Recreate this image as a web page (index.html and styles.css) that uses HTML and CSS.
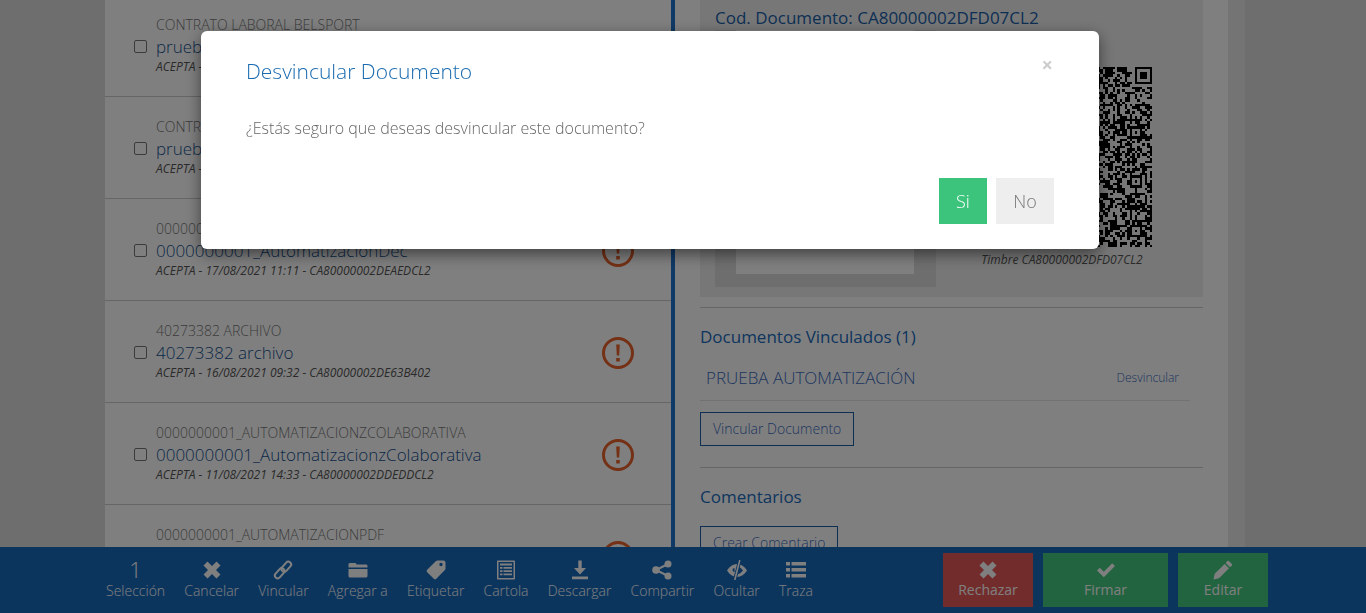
FILE: index.html

```html
<!DOCTYPE html>
<html>
<head>
    <title>Desvincular Documento</title>
    <link rel="stylesheet" href="styles.css">
</head>
<body>
    <div class="page">
        <div class="content">
            <div class="doc-list">
                <div class="doc-row">
                    <input type="checkbox" class="doc-check">
                    <div class="doc-info">
                        <div class="doc-type">CONTRATO LABORAL BELSPORT</div>
                        <a class="doc-name">prueba automatización</a>
                        <div class="doc-meta">ACEPTA - 18/08/2021 10:20 - CA80000002DFD07CL2</div>
                    </div>
                </div>
                <div class="doc-row">
                    <input type="checkbox" class="doc-check">
                    <div class="doc-info">
                        <div class="doc-type">CONTRATO LABORAL BELSPORT</div>
                        <a class="doc-name">prueba automatización</a>
                        <div class="doc-meta">ACEPTA - 18/08/2021 09:47 - CA80000002DF0A3CL2</div>
                    </div>
                </div>
                <div class="doc-row">
                    <input type="checkbox" class="doc-check">
                    <div class="doc-info">
                        <div class="doc-type">0000000001_AUTOMATIZACIONDEC</div>
                        <a class="doc-name">0000000001_AutomatizacionDec</a>
                        <div class="doc-meta">ACEPTA - 17/08/2021 11:11 - CA80000002DEAEDCL2</div>
                    </div>
                    <svg class="doc-alert" viewBox="0 0 32 32"><circle cx="16" cy="16" r="14.5"/><path class="mark" d="M14.2 7.5h3.6l-.6 11h-2.4zM14.2 21h3.6v3.6h-3.6z"/></svg>
                </div>
                <div class="doc-row">
                    <input type="checkbox" class="doc-check">
                    <div class="doc-info">
                        <div class="doc-type">40273382 ARCHIVO</div>
                        <a class="doc-name">40273382 archivo</a>
                        <div class="doc-meta">ACEPTA - 16/08/2021 09:32 - CA80000002DE63B402</div>
                    </div>
                    <svg class="doc-alert" viewBox="0 0 32 32"><circle cx="16" cy="16" r="14.5"/><path class="mark" d="M14.2 7.5h3.6l-.6 11h-2.4zM14.2 21h3.6v3.6h-3.6z"/></svg>
                </div>
                <div class="doc-row">
                    <input type="checkbox" class="doc-check">
                    <div class="doc-info">
                        <div class="doc-type">0000000001_AUTOMATIZACIONZCOLABORATIVA</div>
                        <a class="doc-name">0000000001_AutomatizacionzColaborativa</a>
                        <div class="doc-meta">ACEPTA - 11/08/2021 14:33 - CA80000002DDEDDCL2</div>
                    </div>
                    <svg class="doc-alert" viewBox="0 0 32 32"><circle cx="16" cy="16" r="14.5"/><path class="mark" d="M14.2 7.5h3.6l-.6 11h-2.4zM14.2 21h3.6v3.6h-3.6z"/></svg>
                </div>
                <div class="doc-row">
                    <input type="checkbox" class="doc-check">
                    <div class="doc-info">
                        <div class="doc-type">0000000001_AUTOMATIZACIONPDF</div>
                        <a class="doc-name">0000000001_AutomatizacionPdf</a>
                        <div class="doc-meta">ACEPTA - 10/08/2021 12:05 - CA80000002DD1F2CL2</div>
                    </div>
                    <svg class="doc-alert" viewBox="0 0 32 32"><circle cx="16" cy="16" r="14.5"/><path class="mark" d="M14.2 7.5h3.6l-.6 11h-2.4zM14.2 21h3.6v3.6h-3.6z"/></svg>
                </div>
            </div>

            <div class="detail">
                <div class="doc-box">
                    <div class="doc-code">Cod. Documento: CA80000002DFD07CL2</div>
                    <div class="doc-box-body">
                        <div class="preview"><div class="preview-page"></div></div>
                        <div class="stamp">
                            <svg id="qr" class="qr" viewBox="0 0 73 73" shape-rendering="crispEdges"><path id="qr-path"/></svg>
                            <div class="stamp-label">Timbre CA80000002DFD07CL2</div>
                        </div>
                    </div>
                </div>

                <div class="section linked">
                    <h3 class="section-title">Documentos Vinculados (1)</h3>
                    <div class="linked-row">
                        <a class="linked-name">PRUEBA AUTOMATIZACIÓN</a>
                        <a class="linked-action">Desvincular</a>
                    </div>
                    <button class="outline-btn">Vincular Documento</button>
                </div>

                <div class="section comments">
                    <h3 class="section-title">Comentarios</h3>
                    <button class="outline-btn">Crear Comentario</button>
                </div>
            </div>
            <div class="gutter"></div>
        </div>

        <div class="action-bar">
            <div class="tools">
                <div class="tool"><span class="tool-count">1</span><span>Selección</span></div>
                <div class="tool">
                    <svg viewBox="0 0 20 20"><path d="M1.500 5.500 5.500 1.500 10 6l4.500-4.500 4 4L14 10l4.500 4.500-4 4L10 14l-4.500 4.500-4-4L6 10z"/></svg>
                    <span>Cancelar</span>
                </div>
                <div class="tool">
                    <svg viewBox="0 0 20 20"><g class="line" stroke-width="2"><rect x="-2.800" y="-5.800" width="5.600" height="11.600" rx="2.800" transform="translate(13.300 6.700) rotate(42)"/><rect x="-2.800" y="-5.800" width="5.600" height="11.600" rx="2.800" transform="translate(6.700 13.300) rotate(42)"/></g></svg>
                    <span>Vincular</span>
                </div>
                <div class="tool">
                    <svg viewBox="0 0 20 20"><path d="M.5 4.500C.5 3.500 1.200 3 2 3h5c.8 0 1.300.5 1.500 1.500h9.500c.8 0 1.500.6 1.500 1.400V7.500H.5zM.5 9h19v7c0 .9-.7 1.500-1.500 1.500H2C1.200 17.500.5 16.900.5 16z"/></svg>
                    <span>Agregar a</span>
                </div>
                <div class="tool">
                    <svg viewBox="0 0 20 20"><path fill-rule="evenodd" d="M11.500.5h6c1.100 0 2 .9 2 2v6c0 .6-.2 1-.6 1.400l-8.600 8.900c-.8.700-1.800.7-2.500 0l-6.600-6.600c-.7-.8-.7-1.800 0-2.500L10 1c.4-.3.9-.5 1.500-.5zm3.500 2.300a1.700 1.700 0 1 0 0 3.400 1.700 1.700 0 0 0 0-3.400z"/></svg>
                    <span>Etiquetar</span>
                </div>
                <div class="tool">
                    <svg viewBox="0 0 20 20"><path fill-rule="evenodd" d="M2 .5h16c.6 0 1 .4 1 1v17c0 .6-.4 1-1 1H2c-.6 0-1-.4-1-1v-17c0-.6.4-1 1-1zm.5 1.500v16h15V2zM4 3.500h12v2H4zm0 3.500h2.500v1.700H4zm3.500 0H16v1.700H7.500zM4 10.200h2.500v1.700H4zm3.500 0H16v1.700H7.500zM4 13.500h2.500v1.700H4zm3.500 0H16v1.700H7.500z"/></svg>
                    <span>Cartola</span>
                </div>
                <div class="tool">
                    <svg viewBox="0 0 20 20"><path d="M8.300.5h3.400v7.500H16l-6 6.500-6-6.500h4.300zM2 16.500h16v2.700H2z"/></svg>
                    <span>Descargar</span>
                </div>
                <div class="tool">
                    <svg viewBox="0 0 20 20"><circle cx="16" cy="4" r="3.500"/><circle cx="16" cy="16" r="3.500"/><circle cx="4" cy="10" r="3.800"/><path class="line" stroke-width="2" d="M16 4 4 10l12 6"/></svg>
                    <span>Compartir</span>
                </div>
                <div class="tool">
                    <svg viewBox="0 0 20 20"><path fill-rule="evenodd" d="M0 10.500C2.500 6.300 6 4 10 4s7.500 2.300 10 6.500c-2.500 4.200-6 6.500-10 6.500S2.500 14.700 0 10.500zM11.500 6.800l-.8 7.400c2-.3 3.800-1.800 5.300-3.700-1.300-1.800-2.700-3.100-4.500-3.700zM7.500 8a2 2 0 0 0 0 4z"/><path class="gap" stroke-width="3.400" d="M12.800 0 7.800 20"/><path class="line" stroke-width="1.600" d="M12.800 0 7.800 20"/></svg>
                    <span>Ocultar</span>
                </div>
                <div class="tool">
                    <svg viewBox="0 0 20 20"><path d="M0 2h4v3.500H0zM5.500 2H20v3.500H5.500zM0 8h4v3.500H0zM5.500 8H20v3.500H5.500zM0 14h4v3.500H0zM5.500 14H20v3.500H5.500z"/></svg>
                    <span>Traza</span>
                </div>
            </div>
            <div class="actions">
                <button class="action-btn reject">
                    <svg viewBox="0 0 20 20"><path d="M1.500 5.500 5.500 1.500 10 6l4.500-4.500 4 4L14 10l4.500 4.500-4 4L10 14l-4.500 4.500-4-4L6 10z"/></svg>
                    <span>Rechazar</span>
                </button>
                <button class="action-btn sign">
                    <svg viewBox="0 0 20 20"><path d="M1 10.500 3.800 7.700l4 4 8.400-8.400L19 6.100 7.800 17.300z"/></svg>
                    <span>Firmar</span>
                </button>
                <button class="action-btn edit">
                    <svg viewBox="0 0 20 20"><path d="M14.500 1c.5-.4 1-.4 1.400 0l3 3c.4.400.4 1 0 1.400l-1.900 1.900-4.400-4.400zM11.600 3.900 16 8.300 6 18.300 .5 19.500 1.700 13.800z"/></svg>
                    <span>Editar</span>
                </button>
            </div>
        </div>
    </div>

    <div class="backdrop"></div>

    <div class="modal">
        <button class="modal-close">×</button>
        <h4 class="modal-title">Desvincular Documento</h4>
        <p class="modal-text">¿Estás seguro que deseas desvincular este documento?</p>
        <div class="modal-footer">
            <button class="modal-btn yes">Si</button>
            <button class="modal-btn no">No</button>
        </div>
    </div>

    <script src="qr.js"></script>
</body>
</html>
```

FILE: styles.css

```css
* {
    box-sizing: border-box;
}

body {
    font-family: "Open Sans", Arial, sans-serif;
    background-color: #dcdcdc;
    margin: 0;
    padding: 0;
    overflow: hidden;
}

.page {
    height: 613px;
    display: flex;
    flex-direction: column;
}

.content {
    flex: 1;
    min-height: 0;
    display: flex;
    padding-left: 105px;
    overflow: hidden;
}

/* document list */
.doc-list {
    width: 570px;
    margin-top: -5px;
    background-color: #fff;
    border-right: 4px solid #1f72cc;
    flex-shrink: 0;
}

.doc-row {
    height: 102px;
    display: flex;
    align-items: center;
    padding: 0 37px 2px 29px;
    border-bottom: 1px solid #ccc;
}

.doc-check {
    appearance: none;
    width: 13px;
    height: 13px;
    margin: 3px 9px 0 0;
    border: 1px solid #777;
    border-radius: 2px;
    background-color: #fff;
    flex-shrink: 0;
}

.doc-info {
    flex: 1;
    min-width: 0;
    white-space: nowrap;
}

.doc-type {
    font-size: 14px;
    line-height: 20px;
    font-weight: 300;
    color: #777;
}

.doc-name {
    display: block;
    font-size: 17px;
    line-height: 24px;
    font-weight: 300;
    color: #14508f;
}

.doc-meta {
    font-size: 12px;
    line-height: 16px;
    font-style: italic;
    font-weight: 400;
    color: #555;
}

.doc-alert {
    width: 32px;
    height: 32px;
    margin-top: 5px;
    flex-shrink: 0;
}

.doc-alert circle {
    fill: none;
    stroke: #e8622b;
    stroke-width: 3;
}

.doc-alert .mark {
    fill: #e8622b;
}

/* detail panel */
.detail {
    width: 553px;
    flex-shrink: 0;
    padding: 0 25px;
    background-color: #fff;
}

.doc-box {
    height: 297px;
    background-color: #eee;
    padding: 6px 15px 0;
}

.doc-code {
    font-size: 17px;
    line-height: 24px;
    color: #1a5fa8;
}

.doc-box-body {
    display: flex;
    margin-top: 0;
}

.preview {
    width: 221px;
    height: 257px;
    background-color: #ddd;
    padding: 0 22px 13px 21px;
    display: flex;
}

.preview-page {
    flex: 1;
    background-color: #fff;
}

.stamp {
    width: 180px;
    margin-left: 36px;
    padding-top: 37px;
}

.qr {
    display: block;
    width: 180px;
    height: 180px;
}

.stamp-label {
    font-size: 12px;
    line-height: 16px;
    font-style: italic;
    color: #555;
    margin-left: -10px;
    margin-right: -10px;
    text-align: center;
    white-space: nowrap;
    margin-top: 5px;
}

.section {
    border-top: 1px solid #ccc;
}

.linked {
    margin-top: 10px;
    height: 160px;
}

.section-title {
    margin: 0;
    font-size: 17px;
    line-height: 22px;
    font-weight: 400;
    color: #1a6bbd;
}

.linked .section-title {
    padding-top: 18px;
}

.linked-row {
    width: 490px;
    height: 44px;
    margin-top: 9px;
    padding: 0 11px 2px 6px;
    display: flex;
    align-items: center;
    justify-content: space-between;
    border-bottom: 1px solid #e4e4e4;
}

.linked-name {
    font-size: 17px;
    font-weight: 300;
    color: #3a6bc0;
}

.linked-action {
    font-size: 12px;
    font-weight: 300;
    color: #3a6bc0;
}

.outline-btn {
    display: block;
    height: 34px;
    margin-top: 11px;
    padding: 0 12px 2px;
    border: 1px solid #1a5fa8;
    background-color: #fff;
    font-family: inherit;
    font-size: 14px;
    font-weight: 300;
    color: #3a6bc0;
}

.comments .section-title {
    padding-top: 18px;
}

.comments .outline-btn {
    margin-top: 18px;
}

.gutter {
    width: 17px;
    flex-shrink: 0;
    background-color: #e8e8e8;
}

/* bottom bar */
.action-bar {
    height: 66px;
    flex-shrink: 0;
    display: flex;
    align-items: center;
    justify-content: space-between;
    padding: 0 98px 0 106px;
    background-color: #186abc;
    position: relative;
}

.tools {
    display: flex;
    gap: 19.15px;
    color: #fff;
    margin-top: -2px;
}

.tool {
    display: flex;
    flex-direction: column;
    align-items: center;
    font-size: 14px;
    line-height: 20px;
    font-weight: 300;
}

.tool svg, .action-btn svg {
    width: 20px;
    height: 20px;
    fill: #fff;
}

.tool svg {
    margin: 2px 0 1px;
}

.tool-count {
    font-size: 22px;
    line-height: 23px;
    font-weight: 300;
}

svg .line {
    fill: none;
    stroke: #fff;
}

svg .gap {
    fill: none;
    stroke: #186abc;
}

.actions {
    display: flex;
    gap: 10px;
}

.action-btn {
    width: 90px;
    height: 54px;
    border: none;
    padding: 0;
    display: flex;
    flex-direction: column;
    align-items: center;
    justify-content: center;
    font-family: inherit;
    font-size: 14px;
    line-height: 20px;
    color: #fff;
}

.reject {
    background-color: #e45858;
}

.sign {
    width: 125px;
    background-color: #44c880;
}

.edit {
    background-color: #44c880;
}

/* modal */
.backdrop {
    position: fixed;
    top: 0;
    left: 0;
    right: 0;
    bottom: 0;
    background-color: rgba(0, 0, 0, 0.5);
}

.modal {
    position: fixed;
    top: 31px;
    left: 201px;
    width: 898px;
    height: 218px;
    background-color: #fff;
    border-radius: 6px;
    box-shadow: 0 5px 15px rgba(0, 0, 0, 0.5);
    padding: 26px 45px 0;
}

.modal-close {
    position: absolute;
    top: 23px;
    right: 46px;
    border: none;
    background: none;
    padding: 0;
    font-family: inherit;
    font-size: 20px;
    line-height: 22px;
    font-weight: 700;
    color: #ccc;
}

.modal-title {
    margin: 0;
    font-size: 21px;
    line-height: 28px;
    font-weight: 300;
    color: #1a6bb0;
}

.modal-text {
    margin: 33px 0 0;
    font-size: 16px;
    line-height: 20px;
    font-weight: 300;
    color: #666;
}

.modal-footer {
    display: flex;
    justify-content: flex-end;
    gap: 9px;
    margin-top: 40px;
}

.modal-btn {
    height: 46px;
    border: none;
    font-family: inherit;
    font-size: 18px;
    font-weight: 300;
}

.yes {
    width: 48px;
    background-color: #3cc47c;
    color: #fff;
}

.no {
    width: 58px;
    background-color: #eee;
    color: #777;
}
```

FILE: qr.js

```js
// draws the version 14 code: fixed patterns plus seeded random data modules
const size = 73;
const grid = [];
let seed = 20210818;

function nextRandom() {
    seed = (seed * 1103515245 + 12345) % 2147483648;
    return seed / 2147483648;
}

for (let y = 0; y < size; y++) {
    grid.push([]);
    for (let x = 0; x < size; x++) {
        grid[y].push(nextRandom() > 0.48 ? 1 : 0);
    }
}

function drawSquare(cx, cy, radius) {
    for (let y = cy - radius - 1; y <= cy + radius + 1; y++) {
        for (let x = cx - radius - 1; x <= cx + radius + 1; x++) {
            if (!grid[y] || grid[y][x] === undefined) continue;
            const d = Math.max(Math.abs(x - cx), Math.abs(y - cy));
            if (radius === 3) {
                grid[y][x] = (d === 3 || d <= 1) ? 1 : 0;
            } else if (d <= radius) {
                grid[y][x] = (d === 2 || d === 0) ? 1 : 0;
            }
        }
    }
}

// alignment patterns
[6, 26, 46, 66].forEach(function(ay) {
    [6, 26, 46, 66].forEach(function(ax) {
        if ((ax === 6 && ay === 6) || (ax === 66 && ay === 6) || (ax === 6 && ay === 66)) return;
        drawSquare(ax, ay, 2);
    });
});

// finder patterns
drawSquare(3, 3, 3);
drawSquare(69, 3, 3);
drawSquare(3, 69, 3);

let d = '';
for (let y = 0; y < size; y++) {
    for (let x = 0; x < size; x++) {
        if (grid[y][x]) d += 'M' + x + ' ' + y + 'h1v1h-1z';
    }
}
document.getElementById('qr-path').setAttribute('d', d);
```
